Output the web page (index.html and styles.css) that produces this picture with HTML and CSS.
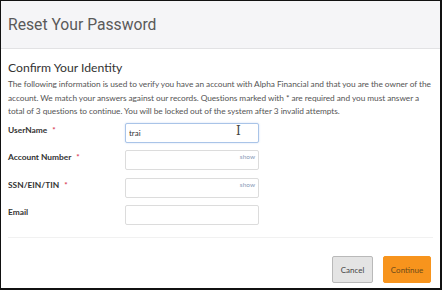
FILE: index.html
```html
<!DOCTYPE html>
<html lang="en">
<head>
    <meta charset="UTF-8">
    <meta name="viewport" content="width=device-width, initial-scale=1.0">
    <title>Reset Your Password</title>
    <link rel="stylesheet" href="styles.css">
</head>
<body>
    <div class="frame">
        <div class="header">
            <h1>Reset Your Password</h1>
        </div>
        <div class="content">
            <h2>Confirm Your Identity</h2>
            <p class="intro">The following information is used to verify you have an account with Alpha Financial and that you are the owner of the account. We match your answers against our records. Questions marked with * are required and you must answer a total of 3 questions to continue. You will be locked out of the system after 3 invalid attempts.</p>
            <div class="form">
                <div class="row">
                    <label for="username">UserName <span class="req">*</span></label>
                    <div class="field focus">
                        <input type="text" id="username" value="trai">
                        <span class="cursor">I</span>
                    </div>
                </div>
                <div class="row">
                    <label for="account">Account Number <span class="req">*</span></label>
                    <div class="field">
                        <input type="text" id="account">
                        <span class="show">show</span>
                    </div>
                </div>
                <div class="row">
                    <label for="ssn">SSN/EIN/TIN <span class="req">*</span></label>
                    <div class="field">
                        <input type="text" id="ssn">
                        <span class="show">show</span>
                    </div>
                </div>
                <div class="row">
                    <label for="email">Email</label>
                    <div class="field">
                        <input type="text" id="email">
                    </div>
                </div>
            </div>
        </div>
        <div class="footer">
            <button class="btn cancel">Cancel</button>
            <button class="btn continue">Continue</button>
        </div>
    </div>
</body>
</html>
```

FILE: styles.css
```css
html, body {
    margin: 0;
    height: 100%;
}
body {
    font-family: Lato, "Open Sans", Arial, sans-serif;
    background-color: #fff;
}
.frame {
    box-sizing: border-box;
    height: 290px;
    width: 442px;
    border: 2px solid #111;
    border-left-width: 1px;
    border-top-width: 1px;
    display: flex;
    flex-direction: column;
}
.header {
    background-color: #f5f5f7;
    border-bottom: 1px solid #e2e2e4;
    height: 48px;
    display: flex;
    align-items: center;
    padding-left: 7px;
    box-sizing: border-box;
}
.header h1 {
    margin: 0;
    font-family: Roboto, Arial, sans-serif;
    font-weight: 400;
    font-size: 15.7px;
    color: #5a5a5a;
}
.content {
    margin: 0 7px;
    padding-top: 10px;
    border-bottom: 1px solid #f1f1f1;
}
.content h2 {
    margin: 0;
    font-family: Lato, "Open Sans", Arial, sans-serif;
    font-weight: 400;
    font-size: 12.2px;
    color: #333;
    line-height: 18px;
}
.intro {
    margin: 1px 0 0;
    font-size: 8.3px;
    letter-spacing: -0.05px;
    line-height: 13.5px;
    color: #555;
}
.form {
    display: flex;
    flex-direction: column;
    gap: 7.6px;
    padding: 1px 0 15px;
}
.row {
    display: flex;
    align-items: center;
    height: 20px;
}
.row label {
    width: 117px;
    font-size: 8.4px;
    font-weight: 700;
    color: #333;
}
.req {
    color: #d9405a;
    margin-left: 3px;
    font-size: 8px;
}
.field {
    position: relative;
    width: 134px;
    height: 20px;
}
.field input {
    box-sizing: border-box;
    width: 100%;
    height: 100%;
    border: 1px solid #dcdcdc;
    border-radius: 2px;
    padding: 0 3px;
    font-family: Lato, Arial, sans-serif;
    font-size: 8px;
    color: #333;
    outline: none;
}
.field.focus input {
    border-color: #a9c4e8;
    box-shadow: 0 0 2px rgba(102, 150, 220, 0.35);
}
.show {
    position: absolute;
    right: 4px;
    top: 6px;
    font-size: 6.5px;
    color: #8a9bb8;
}
.cursor {
    position: absolute;
    left: 111px;
    top: 5px;
    font-family: "DejaVu Serif", serif;
    font-size: 12px;
    line-height: 12px;
    color: #444;
}
.footer {
    flex: 1;
    display: flex;
    justify-content: flex-end;
    align-items: flex-start;
    gap: 10px;
    padding: 18px 9px 0 0;
}
.btn {
    height: 27px;
    border-radius: 2px;
    font-family: Lato, Arial, sans-serif;
    font-size: 8px;
    cursor: pointer;
}
.cancel {
    width: 41px;
    background-color: #e4e4e4;
    border: 1px solid #b9b9b9;
    color: #444;
}
.continue {
    width: 48px;
    background-color: #f7941d;
    border: 1px solid #f7941d;
    color: #6b4a1a;
}
```
